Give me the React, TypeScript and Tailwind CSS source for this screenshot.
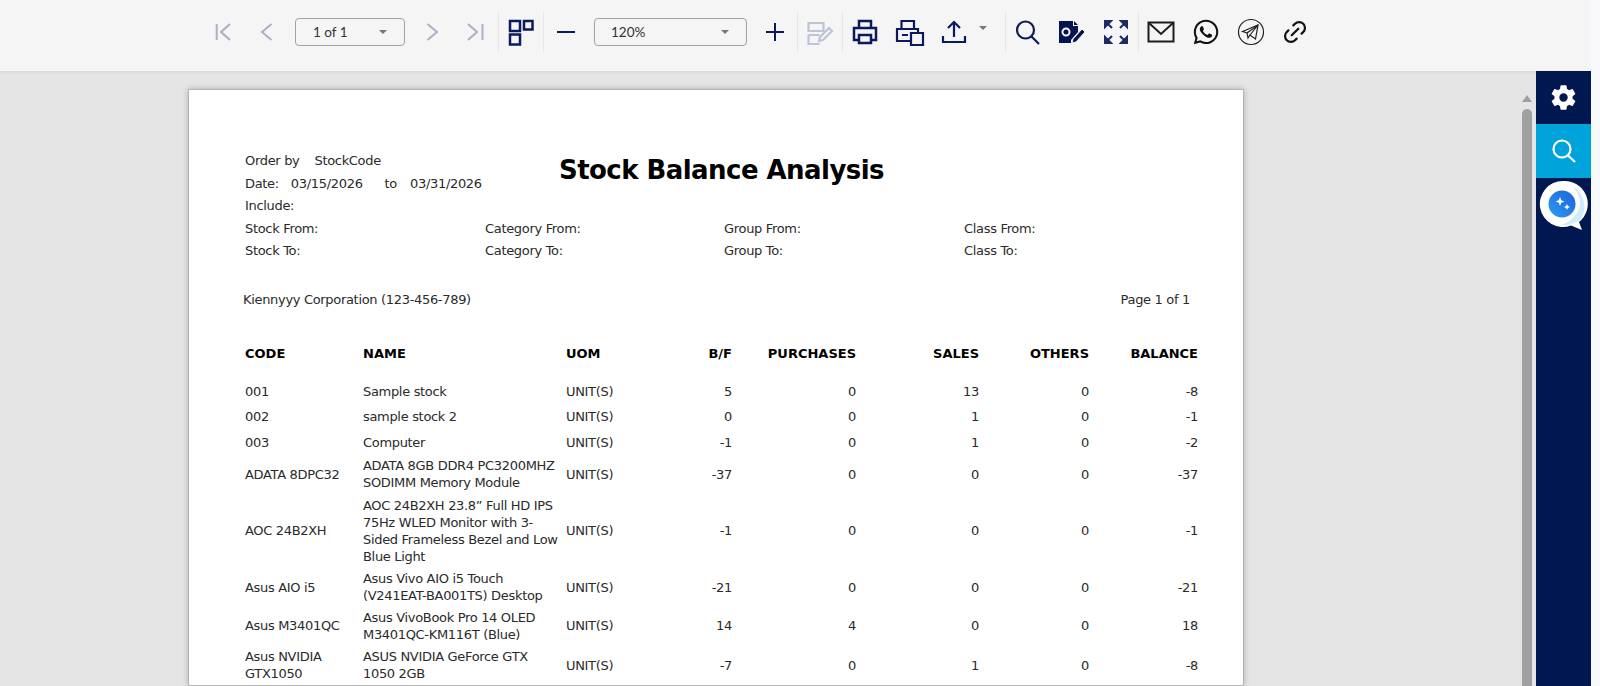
import { Link2 } from "lucide-react";
import { FaWhatsapp } from "react-icons/fa";
import { IoSettingsSharp } from "react-icons/io5";
import type { ReactNode } from "react";

const NAVY = "#0b1a5e";
const MUTED = "#a9b1c6";

const rows = [
  { code: "001", name: "Sample stock", nums: ["5", "0", "13", "0", "-8"], h: "h-[25.5px]" },
  { code: "002", name: "sample stock 2", nums: ["0", "0", "1", "0", "-1"], h: "h-[25.5px]" },
  { code: "003", name: "Computer", nums: ["-1", "0", "1", "0", "-2"], h: "h-[25.5px]" },
  { code: "ADATA 8DPC32", name: "ADATA 8GB DDR4 PC3200MHZ\nSODIMM Memory Module", nums: ["-37", "0", "0", "0", "-37"], h: "h-[38px]" },
  { code: "AOC 24B2XH", name: "AOC 24B2XH 23.8” Full HD IPS\n75Hz WLED Monitor with 3-\nSided Frameless Bezel and Low\nBlue Light", nums: ["-1", "0", "0", "0", "-1"], h: "h-[75px]" },
  { code: "Asus AIO i5", name: "Asus Vivo AIO i5 Touch\n(V241EAT-BA001TS) Desktop", nums: ["-21", "0", "0", "0", "-21"], h: "h-[38px]" },
  { code: "Asus M3401QC", name: "Asus VivoBook Pro 14 OLED\nM3401QC-KM116T (Blue)", nums: ["14", "4", "0", "0", "18"], h: "h-[39px]" },
  { code: "Asus NVIDIA\nGTX1050", name: "ASUS NVIDIA GeForce GTX\n1050 2GB", nums: ["-7", "0", "1", "0", "-8"], h: "h-[40px]" },
];

const Slot = ({ children }: { children: ReactNode }) => (
  <div className="flex h-10 w-11 shrink-0 items-center justify-center">{children}</div>
);

const Sep = () => <div className="h-10 w-px shrink-0 bg-[#e6e6e6]" />;

const Icon = ({ children, color = NAVY, width = 2 }: { children: ReactNode; color?: string; width?: number }) => (
  <svg width="32" height="32" viewBox="0 0 32 32" fill="none" stroke={color} strokeWidth={width}>
    {children}
  </svg>
);

const Caret = () => <div className="h-0 w-0 border-x-[4px] border-t-[4px] border-x-transparent border-t-[#777777]" />;

const Dropdown = ({ label, className }: { label: string; className: string }) => (
  <div className={`mt-1.5 flex h-[28px] shrink-0 items-center justify-between rounded-[4px] border-[1.5px] border-[#a3a3a3] text-[13.5px] text-[#333333] ${className}`}>
    <span>{label}</span>
    <Caret />
  </div>
);

function Toolbar() {
  return (
    <div className="flex h-[71px] shrink-0 items-start bg-[#f5f5f5] pl-[201px] pt-3 font-['Lato',sans-serif]">
      <Slot>
        <Icon color={MUTED}>
          <path d="M9.700 8v16M23 8l-9 8 9 8" />
        </Icon>
      </Slot>
      <Slot>
        <Icon color={MUTED}>
          <path d="M20.500 8 11 16l9.500 8" />
        </Icon>
      </Slot>
      <Dropdown label="1 of 1" className="ml-1.5 w-[110px] pl-[17px] pr-[17px]" />
      <div className="ml-[5px]" />
      <Slot>
        <Icon color={MUTED}>
          <path d="M11.500 8 21 16l-9.500 8" />
        </Icon>
      </Slot>
      <Slot>
        <Icon color={MUTED}>
          <path d="M8 8l9 8-9 8M22.500 8v16" />
        </Icon>
      </Slot>
      <Sep />
      <Slot>
        <Icon width={2.500}>
          <rect x="5" y="5" width="10" height="10" />
          <rect x="19" y="5" width="8.500" height="8.500" />
          <rect x="5" y="18.500" width="10" height="10" />
        </Icon>
      </Slot>
      <Sep />
      <Slot>
        <Icon>
          <path d="M7 16h18" />
        </Icon>
      </Slot>
      <Dropdown label="120%" className="ml-1.5 w-[153px] pl-[16px] pr-[17px]" />
      <div className="ml-1.5" />
      <Slot>
        <Icon>
          <path d="M7 16h18M16 7v18" />
        </Icon>
      </Slot>
      <Sep />
      <Slot>
        <Icon color="#bcc4d6" width={2.200}>
          <path d="M4.500 7h15v8h-15zM4.500 19h11M4.500 19v9h11" />
          <path d="M15 25l1-4 9-9 3 3-9 9z" fill="#f5f5f5" />
        </Icon>
      </Slot>
      <Sep />
      <Slot>
        <Icon width={2.500}>
          <path d="M10 12V5h12v7M10 24H5V12h22v12h-5" />
          <path d="M10 19h12v8H10z" />
        </Icon>
      </Slot>
      <Slot>
        <Icon width={2.200}>
          <path d="M8.500 13V5h12.500v8M17 25H4V13h21v3M9 19h6" />
          <path d="M18 17h12v12H18z" />
        </Icon>
      </Slot>
      <Slot>
        <Icon width={2.200}>
          <path d="M17 21V7M11 12l6-6 6 6M6 20v6h22v-6" />
        </Icon>
      </Slot>
      <div className="flex h-10 w-[15px] shrink-0 items-center justify-center pb-2">
        <Caret />
      </div>
      <div className="w-[15px] shrink-0" />
      <Sep />
      <Slot>
        <Icon color="#101c55" width={2.200}>
          <circle cx="13.500" cy="14" r="8.500" />
          <path d="M19.500 20.500 27 28" />
        </Icon>
      </Slot>
      <Slot>
        <svg width="32" height="32" viewBox="0 0 32 32">
          <path d="M3 5h14v5h5v6l-7 8v3H3z" fill="#03144f" />
          <circle cx="10" cy="16" r="3.500" fill="none" stroke="#f5f5f5" strokeWidth="2" />
          <path d="M18 5l4 4h-4z" fill="#03144f" />
          <path d="M16 27l1-4 9-10 3 3-9 10z" fill="#03144f" stroke="#f5f5f5" strokeWidth="1" />
        </svg>
      </Slot>
      <Slot>
        <svg width="32" height="32" viewBox="0 0 32 32" fill="#1c2a66" stroke="#1c2a66" strokeWidth="2">
          <path d="M5 5h6l-6 6z" />
          <path d="M27 5h-6l6 6z" />
          <path d="M5 27h6l-6-6z" />
          <path d="M27 27h-6l6-6z" />
          <path d="M7 7l5 5M25 7l-5 5M7 25l5-5M25 25l-5-5" />
        </svg>
      </Slot>
      <Sep />
      <Slot>
        <Icon color="#1c1c1c">
          <rect x="3.500" y="6.500" width="25" height="19" />
          <path d="M4 7l12 11L28 7" />
        </Icon>
      </Slot>
      <div className="w-px shrink-0" />
      <Slot>
        <FaWhatsapp size={28} color="#111111" />
      </Slot>
      <div className="w-px shrink-0" />
      <Slot>
        <Icon color="#222222" width={1.200}>
          <circle cx="16" cy="16" r="12.500" />
          <path d="M7.500 15.500 23 9l-2.500 14-5.500-4-2 3-1-5z" fill="#f5f5f5" />
          <path d="M12 17 23 9l-8 10" />
        </Icon>
      </Slot>
      <Slot>
        <Link2 size={28} color="#111111" strokeWidth={1.900} className="-rotate-45" />
      </Slot>
    </div>
  );
}

function Report() {
  return (
    <div className="w-[1056px] shrink-0 border border-[#b5b5b5] bg-white pl-[56px] pr-[44px] pt-[60px] font-['DejaVu_Sans',sans-serif] text-[13px] tracking-[-0.32px] text-[#2a2a2a] shadow-[0_0_6px_rgba(0,0,0,0.25)]">
      <div className="flex leading-[22.500px]">
        <div className="w-[314px] shrink-0">
          <p>
            Order by<span className="ml-[15px]">StockCode</span>
          </p>
          <p>
            Date:<span className="ml-3">03/15/2026</span>
            <span className="ml-[22px]">to</span>
            <span className="ml-[13px]">03/31/2026</span>
          </p>
          <p>Include:</p>
        </div>
        <h1 className="pt-[5px] text-[26px] font-bold leading-[30px] tracking-[-0.55px] text-black">Stock Balance Analysis</h1>
      </div>
      <div className="grid grid-cols-[240px_239px_240px_240px] leading-[22.500px]">
        <p>Stock From:</p>
        <p>Category From:</p>
        <p>Group From:</p>
        <p>Class From:</p>
        <p>Stock To:</p>
        <p>Category To:</p>
        <p>Group To:</p>
        <p>Class To:</p>
      </div>
      <div className="-ml-[2px] mt-[26px] flex justify-between pr-[9px] leading-[22px]">
        <span>Kiennyyy Corporation (123-456-789)</span>
        <span>Page 1 of 1</span>
      </div>
      <table className="mt-[30px] table-fixed border-collapse">
        <colgroup>
          <col className="w-[118px]" />
          <col className="w-[203px]" />
          <col className="w-[66px]" />
          <col className="w-[100px]" />
          <col className="w-[124px]" />
          <col className="w-[123px]" />
          <col className="w-[110px]" />
          <col className="w-[109px]" />
        </colgroup>
        <thead>
          <tr className="h-[26px] text-left font-bold tracking-normal text-black">
            <th className="p-0">CODE</th>
            <th className="p-0">NAME</th>
            <th className="p-0">UOM</th>
            <th className="p-0 text-right">B/F</th>
            <th className="p-0 text-right">PURCHASES</th>
            <th className="p-0 text-right">SALES</th>
            <th className="p-0 text-right">OTHERS</th>
            <th className="p-0 text-right">BALANCE</th>
          </tr>
          <tr className="h-3" />
        </thead>
        <tbody className="leading-[17px]">
          {rows.map((row) => (
            <tr key={row.code} className={row.h}>
              <td className="whitespace-pre-line p-0">{row.code}</td>
              <td className="whitespace-pre-line p-0">{row.name}</td>
              <td className="p-0">UNIT(S)</td>
              {row.nums.map((n, i) => (
                <td key={i} className="p-0 text-right">
                  {n}
                </td>
              ))}
            </tr>
          ))}
        </tbody>
      </table>
    </div>
  );
}

function Sidebar() {
  return (
    <div className="flex h-full w-[55px] shrink-0 flex-col bg-[#00174f]">
      <div className="flex h-[53px] items-center justify-center">
        <IoSettingsSharp size={27} color="#ffffff" />
      </div>
      <div className="flex h-[54px] items-center justify-center bg-[#00a3da]">
        <svg width="32" height="32" viewBox="0 0 32 32" fill="none" stroke="#ffffff" strokeWidth="2.200">
          <circle cx="14" cy="14" r="8.500" />
          <path d="M20 20.500 27 27" />
        </svg>
      </div>
      <div className="flex justify-start pl-[2px] pt-[2px]">
        <svg width="50" height="52" viewBox="0 0 50 52">
          <defs>
            <linearGradient id="orb" x1="0" y1="1" x2="1" y2="0">
              <stop offset="0" stopColor="#2f9bf2" />
              <stop offset="1" stopColor="#1a63d8" />
            </linearGradient>
          </defs>
          <path d="M25 1a23 23 0 1 0 8 44.500L44 50l-3-8A23 23 0 0 0 25 1z" fill="#ffffff" />
          <path d="M34 6a23 23 0 0 1 8 34c-6 4-14 6-20 5 10-2 20-12 20-22 0-7-4-13-8-17z" fill="#cfeefb" />
          <circle cx="24" cy="24" r="13.500" fill="url(#orb)" />
          <path d="M22 17l1.200 3.300 3.300 1.200-3.300 1.200L22 26l-1.200-3.300-3.300-1.200 3.300-1.200zM29 24l.9 2.100 2.100.9-2.100.9-.9 2.100-.9-2.100-2.100-.9 2.100-.9z" fill="#ffffff" />
        </svg>
      </div>
    </div>
  );
}

export default function App() {
  return (
    <div className="flex h-[686px] w-[1600px] overflow-hidden bg-[#f8f9fb]">
      <div className="flex w-[1591px] shrink-0 flex-col overflow-hidden">
        <Toolbar />
        <div className="flex min-h-0 flex-1 overflow-hidden">
          <div className="flex w-[1536px] shrink-0 overflow-hidden bg-[#e5e5e5] pl-[188px] pt-[18px] shadow-[inset_0_3px_3px_-2px_rgba(0,0,0,0.08)]">
            <Report />
            <div className="ml-[278px] flex w-[10px] shrink-0 flex-col items-center pt-[6px]">
              <div className="h-0 w-0 border-x-[5px] border-b-[7px] border-x-transparent border-b-[#a0a0a0]" />
              <div className="mt-[7px] min-h-0 w-[10px] flex-1 rounded-t-[5px] bg-[#a0a0a0]" />
            </div>
          </div>
          <Sidebar />
        </div>
      </div>
    </div>
  );
}
